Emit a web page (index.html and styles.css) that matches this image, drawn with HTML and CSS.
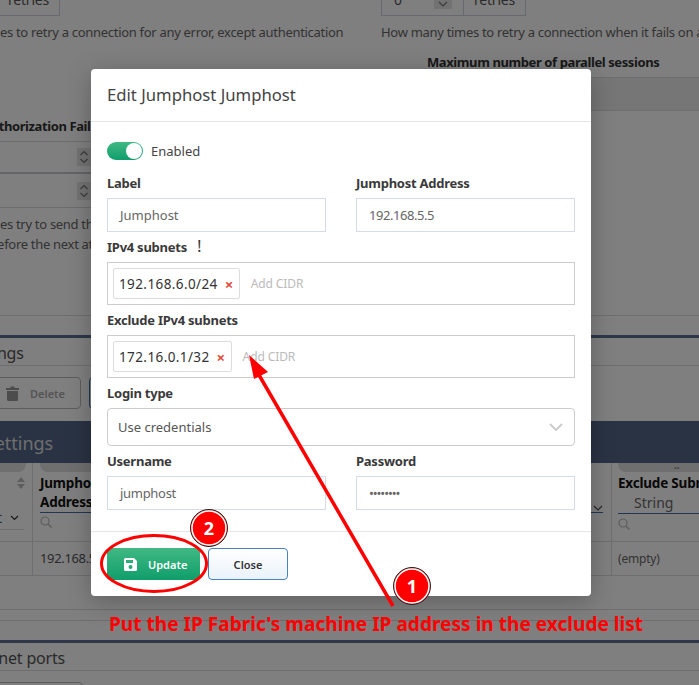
FILE: index.html
```html
<!DOCTYPE html>
<html lang="en">
<head>
    <meta charset="UTF-8" />
    <title>Jumphost settings</title>
    <link rel="stylesheet" href="styles.css">
</head>
<body>
    <div class="page">
        <section class="top">
            <div class="col col-left">
                <div class="group">
                    <div class="group-input"></div>
                    <div class="group-addon">retries</div>
                </div>
                <p class="help first">How many times to retry a connection for any error, except authentication</p>
                <div class="field-title title-left">Authorization Failures</div>
                <div class="spin-row"><span class="spin"><svg width="10" height="16" viewBox="0 0 10 16"><path d="M1.5 6 5 2.500 8.500 6M1.500 10 5 13.500 8.500 10" fill="none" stroke="#777" stroke-width="1.200"/></svg></span></div>
                <div class="spin-row second"><span class="spin"><svg width="10" height="16" viewBox="0 0 10 16"><path d="M1.5 6 5 2.500 8.500 6M1.500 10 5 13.500 8.500 10" fill="none" stroke="#777" stroke-width="1.200"/></svg></span></div>
                <p class="help after-spin">How many times try to send the</p>
                <p class="help">Time to wait before the next attempt</p>
            </div>
            <div class="col col-right">
                <div class="group">
                    <div class="group-input narrow">0<span class="select-arrow"><svg width="10" height="6" viewBox="0 0 10 6"><path d="M1 1l4 4 4-4" fill="none" stroke="#777" stroke-width="1.200"/></svg></span></div>
                    <div class="group-addon">retries</div>
                </div>
                <p class="help first nowrap">How many times to retry a connection when it fails on a</p>
                <div class="field-title title-right">Maximum number of parallel sessions</div>
                <div class="band"></div>
            </div>
        </section>

        <section class="panel">
            <div class="panel-title title-a">Jumphost Settings</div>
            <div class="toolbar">
                <div class="tool-btn">
                    <svg width="13" height="15" viewBox="0 0 13 15"><path d="M0 2h4l1-1.500h3L9 2h4v2H0zM1 5h11v8.500a1.500 1.500 0 0 1-1.500 1.500h-8A1.500 1.500 0 0 1 1 13.500z" fill="#999"/></svg>
                    <span>Delete</span>
                </div>
                <div class="tool-btn blue"></div>
            </div>
            <div class="table-head">Jumphost Settings</div>
            <div class="table-row head-row">
                <div class="cell cell-a">
                    <span class="tab"></span>
                    <svg class="sort" width="8" height="12" viewBox="0 0 8 12"><path d="M4 0l4 5H0zM4 12l4-5H0z" fill="#bbb"/></svg>
                    <div class="filter-line">List<svg width="9" height="6" viewBox="0 0 9 6"><path d="M1 1l3.500 3.500L8 1" fill="none" stroke="#333" stroke-width="1.200"/></svg></div>
                </div>
                <div class="cell cell-b">
                    <span class="tab tab-b"></span>
                    <div class="col-name">Jumphost<br>Address</div>
                    <svg class="search" width="12" height="12" viewBox="0 0 12 12"><circle cx="5" cy="5" r="4" fill="none" stroke="#bbb" stroke-width="1.200"/><path d="M8 8l3.500 3.500" stroke="#bbb" stroke-width="1.400"/></svg>
                    <div class="mid-select"><svg width="10" height="6" viewBox="0 0 10 6"><path d="M1 1l4 4 4-4" fill="none" stroke="#555" stroke-width="1.200"/></svg></div>
                </div>
                <div class="cell cell-c">
                    <span class="tab tab-c">..</span>
                    <div class="col-name one">Exclude Subnets</div>
                    <div class="type-select">String</div>
                    <svg class="search" width="12" height="12" viewBox="0 0 12 12"><circle cx="5" cy="5" r="4" fill="none" stroke="#bbb" stroke-width="1.200"/><path d="M8 8l3.500 3.500" stroke="#bbb" stroke-width="1.400"/></svg>
                </div>
            </div>
            <div class="table-row body-row">
                <div class="cell cell-a"></div>
                <div class="cell cell-b">192.168.5.5</div>
                <div class="cell cell-c small">(empty)</div>
            </div>
            <div class="table-foot"></div>
            <div class="table-foot thin"></div>
        </section>

        <section class="panel telnet">
            <div class="panel-title title-b">Telnet ports</div>
            <div class="port-box"></div>
        </section>
    </div>

    <div class="overlay"></div>

    <div class="modal">
        <div class="modal-head">Edit Jumphost Jumphost</div>
        <div class="modal-body">
            <div class="switch-row">
                <span class="switch"><span class="knob"></span></span>
                <span>Enabled</span>
            </div>
            <div class="two">
                <div>
                    <label class="lbl">Label</label>
                    <div class="input">Jumphost</div>
                </div>
                <div>
                    <label class="lbl">Jumphost Address</label>
                    <div class="input addr">192.168.5.5</div>
                </div>
            </div>
            <label class="lbl">IPv4 subnets <span class="bang">!</span></label>
            <div class="tags">
                <span class="tag">192.168.6.0/24 <b>&times;</b></span>
                <span class="add">Add CIDR</span>
            </div>
            <label class="lbl">Exclude IPv4 subnets</label>
            <div class="tags">
                <span class="tag">172.16.0.1/32 <b>&times;</b></span>
                <span class="add">Add CIDR</span>
            </div>
            <label class="lbl">Login type</label>
            <div class="select">
                <span>Use credentials</span>
                <svg width="14" height="8" viewBox="0 0 14 8"><path d="M1 1l6 6 6-6" fill="none" stroke="#ccc" stroke-width="2"/></svg>
            </div>
            <div class="two">
                <div>
                    <label class="lbl">Username</label>
                    <div class="input user">jumphost</div>
                </div>
                <div>
                    <label class="lbl">Password</label>
                    <div class="input dots">&bull;&bull;&bull;&bull;&bull;&bull;&bull;&bull;</div>
                </div>
            </div>
        </div>
        <div class="modal-foot">
            <button class="btn btn-green">
                <svg width="13" height="13" viewBox="0 0 13 13"><path fill="#fff" fill-rule="evenodd" d="M1.500 0H10l3 3v8.500a1.500 1.500 0 0 1-1.500 1.500h-10A1.500 1.500 0 0 1 0 11.500v-10A1.500 1.500 0 0 1 1.500 0zM2 2v3h7V2zM6.500 7a2 2 0 1 0 0 4 2 2 0 0 0 0-4z"/></svg>
                Update
            </button>
            <button class="btn btn-light">Close</button>
        </div>
    </div>

    <svg class="marks" width="699" height="685" viewBox="0 0 699 685">
        <ellipse cx="154" cy="563.500" rx="52.500" ry="28" fill="none" stroke="#f00" stroke-width="3"/>
        <path d="M393 606 259 375" stroke="#f00" stroke-width="3.500" fill="none"/>
        <path d="M249 355 268 372 254 379z" fill="#f00"/>
        <circle cx="209" cy="528" r="18.500" fill="#f00" stroke="#222" stroke-width="1"/>
        <circle cx="209" cy="528" r="17" fill="none" stroke="#fff" stroke-width="1.500"/>
        <circle cx="412" cy="586" r="18.500" fill="#f00" stroke="#222" stroke-width="1"/>
        <circle cx="412" cy="586" r="17" fill="none" stroke="#fff" stroke-width="1.500"/>
    </svg>
    <span class="num num-two">2</span>
    <span class="num num-one">1</span>
    <div class="caption">Put the IP Fabric's machine IP address in the exclude list</div>
</body>
</html>
```

FILE: styles.css
```css
html,
body {
    margin: 0;
    padding: 0;
    height: 685px;
    overflow: hidden;
}

body {
    position: relative;
    width: 699px;
    font-family: "Noto Sans", sans-serif;
    font-size: 14px;
    color: #333;
    background-color: #fff;
}

/* page behind the dialog, it is cropped on the left and top */
.page {
    width: 900px;
    margin-left: -85px;
    margin-top: -18px;
}

.top {
    display: flex;
    gap: 30px;
    height: 333px;
    margin-bottom: 19px;
    border-bottom: 1px solid #ddd;
}

.col-left {
    width: 436px;
    flex: none;
}

.col-right {
    flex: 1;
}

.group {
    display: flex;
    height: 34px;
    box-sizing: border-box;
    border: 1px solid #ccd3dc;
    width: 145px;
}

.group-input {
    width: 82px;
    flex: none;
    display: flex;
    justify-content: space-between;
    padding-left: 12px;
    box-sizing: border-box;
    line-height: 34px;
    border-right: 1px solid #ccd3dc;
    color: #555;
}

.select-arrow {
    width: 18px;
    height: 26px;
    margin-right: 11px;
    background-color: #e4e4e4;
    display: flex;
    align-items: flex-end;
    justify-content: center;
    padding-bottom: 2px;
    box-sizing: border-box;
}

.group-addon {
    flex: 1;
    text-align: center;
    line-height: 34px;
    letter-spacing: -0.200px;
    color: #555;
}

.help {
    margin: 0;
    line-height: 20px;
    font-size: 13px;
    letter-spacing: -0.300px;
    color: #666;
    white-space: nowrap;
}

.help.first {
    margin-top: 6px;
}

.field-title {
    font-weight: bold;
    font-size: 13px;
    line-height: 20px;
    letter-spacing: -0.400px;
}

.title-left {
    margin-top: 74px;
    margin-left: 67px;
}

.title-right {
    margin-top: 10px;
    margin-left: 46px;
}

.band {
    height: 32px;
    margin-top: 5px;
    margin-left: -40px;
    background-color: #ececec;
    border-top: 1px solid #ddd;
    border-bottom: 1px solid #ddd;
}

.spin-row {
    height: 33px;
    margin-top: 5px;
    border-top: 1px solid #d8d8d8;
    border-bottom: 2px solid #c4c8d0;
    display: flex;
    align-items: center;
    padding-left: 162px;
    box-sizing: border-box;
}

.spin-row.second {
    margin-top: 0;
    height: 34px;
    border-top: 0;
    border-bottom: 1px solid #d8d8d8;
}

.spin {
    width: 14px;
    height: 18px;
    background-color: #e4e4e4;
    display: flex;
    align-items: center;
    justify-content: center;
}

.help.after-spin {
    margin-top: 6px;
}

.panel {
    border-top: 3px solid #5a6f90;
}

.panel-title {
    height: 27px;
    line-height: 30px;
    font-size: 16px;
    letter-spacing: -0.200px;
    color: #555;
    border-bottom: 1px solid #ddd;
}

.title-a {
    text-indent: -25px;
}

.title-b {
    text-indent: 63px;
}

.toolbar {
    display: flex;
    gap: 8px;
    padding-top: 11px;
    height: 55px;
    box-sizing: border-box;
}

.tool-btn {
    width: 166px;
    height: 32px;
    box-sizing: border-box;
    border: 1px solid #bbb;
    border-radius: 4px;
    display: flex;
    align-items: center;
    justify-content: flex-end;
    padding-right: 15px;
    gap: 11px;
    font-size: 11px;
    font-weight: 600;
    color: #aaa;
}

.tool-btn.blue {
    border-color: #3f6fa8;
}

.table-head {
    height: 42px;
    line-height: 44px;
    background-color: #546688;
    color: #ddd;
    font-size: 18px;
    text-indent: -16px;
    overflow: hidden;
}

.table-row {
    display: flex;
    border-bottom: 1px solid #ddd;
}

.head-row {
    height: 78px;
}

.body-row {
    height: 33px;
    line-height: 33px;
}

.cell {
    box-sizing: border-box;
    border-right: 1px solid #ddd;
    padding-left: 7px;
}

.cell-a {
    width: 118px;
    padding-left: 0;
}

.cell-b {
    width: 579px;
    font-size: 13px;
    letter-spacing: -0.350px;
    color: #555;
}

.cell-c {
    flex: 1;
    border-right: 0;
    padding-left: 6px;
}

.small {
    font-size: 12px;
    letter-spacing: -0.200px;
    color: #666;
}

.tab {
    display: block;
    height: 9px;
    background-color: #dedede;
    border-radius: 0 0 8px 8px;
    margin-right: 6px;
}

.tab-b {
    width: 300px;
}

.tab-c {
    font-size: 10px;
    line-height: 4px;
    padding-left: 56px;
    font-weight: bold;
    color: #777;
}

.col-name {
    font-weight: bold;
    font-size: 13.500px;
    letter-spacing: -0.200px;
    line-height: 19px;
    color: #111;
    margin-top: 2px;
}

.sort {
    display: block;
    margin: 5px 0 0 102px;
}

.filter-line {
    margin-top: 21px;
    margin-right: 8px;
    height: 20px;
    box-sizing: border-box;
    padding-right: 5px;
    border-bottom: 1px solid #ddd;
    display: flex;
    justify-content: flex-end;
    align-items: flex-start;
    gap: 8px;
    line-height: 15px;
    color: #555;
}

.filter-line svg {
    margin-top: 5px;
}

.search {
    display: block;
    margin-top: 4px;
}

.mid-select {
    margin: -31px 8px 0 0;
    height: 15px;
    border-bottom: 1px solid #3f6fa8;
    text-align: right;
}

.type-select {
    height: 20px;
    padding-left: 16px;
    line-height: 20px;
    color: #666;
    border-bottom: 1px solid #3f6fa8;
}

.col-name.one {
    white-space: nowrap;
}

.table-foot {
    height: 33px;
    border-bottom: 1px solid #ddd;
}

.table-foot.thin {
    height: 10px;
}

.telnet {
    margin-top: 19px;
}

.port-box {
    width: 166px;
    height: 30px;
    margin-top: 11px;
    border: 1px solid #bbb;
    border-radius: 4px;
}

.overlay {
    position: absolute;
    top: 0;
    left: 0;
    width: 699px;
    height: 685px;
    background-color: rgba(0, 0, 0, 0.5);
}

/* dialog */
.modal {
    position: absolute;
    top: 69px;
    left: 91px;
    width: 500px;
    height: 527px;
    border-radius: 4px;
    background-color: #fff;
    box-shadow: 0 5px 25px rgba(0, 0, 0, 0.25);
}

.modal-head {
    height: 52px;
    line-height: 52px;
    padding-left: 16px;
    font-size: 16.700px;
    color: #444;
    border-bottom: 1px solid #e6e6e6;
}

.modal-body {
    padding: 20px 16px 0;
    height: 389px;
}

.switch-row {
    display: flex;
    align-items: center;
    gap: 8px;
    height: 18px;
    font-size: 13px;
    color: #444;
}

.switch {
    width: 36px;
    height: 18px;
    border-radius: 9px;
    background: linear-gradient(#41b883, #0f9e6b);
    display: flex;
    justify-content: flex-end;
    box-sizing: border-box;
    padding: 1px;
}

.knob {
    width: 16px;
    height: 16px;
    border-radius: 50%;
    background-color: #fff;
}

.two {
    display: flex;
    gap: 30px;
}

.two > div {
    width: 219px;
}

.lbl {
    display: block;
    height: 20px;
    line-height: 20px;
    margin-top: 5px;
    margin-bottom: 5px;
    font-weight: bold;
    font-size: 13px;
    letter-spacing: -0.250px;
    color: #3a3a3a;
}

.switch-row + .two .lbl {
    margin-top: 13px;
}

.bang {
    margin-left: 7px;
    font-weight: normal;
    font-size: 17px;
    line-height: 1;
}

.input {
    height: 34px;
    box-sizing: border-box;
    border: 1px solid #d5dce6;
    padding-left: 12px;
    line-height: 32px;
    font-size: 13px;
    color: #666;
}

.input.addr {
    letter-spacing: -0.450px;
}

.input.user {
    letter-spacing: -0.300px;
}

.dots {
    letter-spacing: -1.100px;
}

.tags {
    height: 43px;
    box-sizing: border-box;
    border: 1px solid #ccc;
    padding: 5px;
    display: flex;
    align-items: stretch;
    gap: 11px;
}

.tag {
    display: flex;
    align-items: center;
    gap: 7px;
    box-sizing: border-box;
    border: 1px solid #ddd;
    border-radius: 2px;
    padding: 0 5px;
    font-size: 13.500px;
    letter-spacing: 0.400px;
    color: #333;
}

.tag b {
    font-size: 15px;
    color: #e04b3a;
}

.add {
    align-self: center;
    font-size: 12px;
    letter-spacing: -0.100px;
    color: #bbb;
}

.select {
    height: 38px;
    box-sizing: border-box;
    border: 1px solid #ccc;
    border-radius: 4px;
    padding: 0 11px 0 10px;
    display: flex;
    align-items: center;
    justify-content: space-between;
    font-size: 13px;
    color: #555;
}

.modal-foot {
    border-top: 1px solid #e6e6e6;
    padding: 16px;
    display: flex;
    gap: 8px;
}

.btn {
    height: 32px;
    border-radius: 4px;
    box-sizing: border-box;
    font-family: "Noto Sans", sans-serif;
    font-size: 11px;
    font-weight: 600;
    cursor: pointer;
}

.btn-green {
    width: 93px;
    padding-left: 17px;
    display: flex;
    align-items: center;
    gap: 11px;
    border: none;
    color: #fff;
    background: linear-gradient(#41b883, #0f9e6b);
}

.btn-light {
    width: 80px;
    border: 1px solid #4a7fc0;
    color: #333;
    background: linear-gradient(#fff, #eaf2fb);
}

/* annotations drawn on top of the screenshot */
.marks {
    position: absolute;
    top: 0;
    left: 0;
}

.num {
    position: absolute;
    width: 36px;
    text-align: center;
    font-weight: bold;
    font-size: 18px;
    line-height: 24px;
    color: #fff;
}

.num-two {
    left: 191px;
    top: 516px;
}

.num-one {
    left: 394px;
    top: 574px;
}

.caption {
    position: absolute;
    left: 109px;
    top: 610px;
    font-size: 19.100px;
    line-height: 28px;
    font-weight: bold;
    white-space: nowrap;
    color: #f00;
}
```
